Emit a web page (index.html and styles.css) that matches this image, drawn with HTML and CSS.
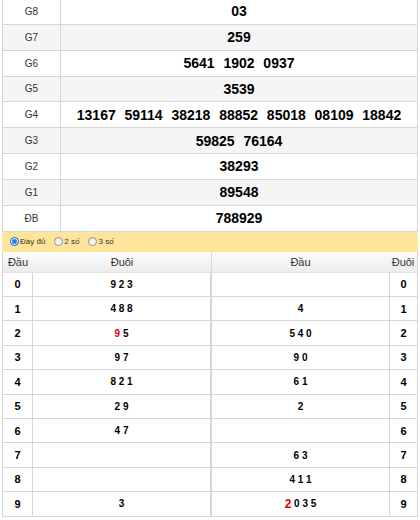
FILE: index.html
```html
<!DOCTYPE html>
<html>
<head>
<meta charset="utf-8">
<link rel="stylesheet" href="styles.css">
</head>
<body>
<div class="wrap">
  <div class="kq">
    <div class="row"><div class="lbl">G8</div><div class="val">03</div></div>
    <div class="row"><div class="lbl">G7</div><div class="val">259</div></div>
    <div class="row"><div class="lbl">G6</div><div class="val">5641  1902  0937</div></div>
    <div class="row"><div class="lbl">G5</div><div class="val">3539</div></div>
    <div class="row"><div class="lbl">G4</div><div class="val">13167  59114  38218  88852  85018  08109  18842</div></div>
    <div class="row"><div class="lbl">G3</div><div class="val">59825  76164</div></div>
    <div class="row"><div class="lbl">G2</div><div class="val">38293</div></div>
    <div class="row"><div class="lbl">G1</div><div class="val">89548</div></div>
    <div class="row"><div class="lbl">ĐB</div><div class="val">788929</div></div>
  </div>
  <div class="opts">
    <span class="opt"><span class="radio on"></span>Đầy đủ</span>
    <span class="opt"><span class="radio"></span>2 số</span>
    <span class="opt"><span class="radio"></span>3 số</span>
  </div>
  <div class="loto">
    <div class="lt lt-left">
      <div class="lh">Đầu</div><div class="lh">Đuôi</div>
      <div class="hd">0</div><div class="tl">9 2 3</div>
      <div class="hd">1</div><div class="tl">4 8 8</div>
      <div class="hd">2</div><div class="tl"><span class="red">9</span> 5</div>
      <div class="hd">3</div><div class="tl">9 7</div>
      <div class="hd">4</div><div class="tl">8 2 1</div>
      <div class="hd">5</div><div class="tl">2 9</div>
      <div class="hd">6</div><div class="tl">4 7</div>
      <div class="hd">7</div><div class="tl"></div>
      <div class="hd">8</div><div class="tl"></div>
      <div class="hd">9</div><div class="tl">3</div>
    </div>
    <div class="lt lt-right">
      <div class="lh">Đầu</div><div class="lh">Đuôi</div>
      <div class="tl"></div><div class="hd">0</div>
      <div class="tl">4</div><div class="hd">1</div>
      <div class="tl">5 4 0</div><div class="hd">2</div>
      <div class="tl">9 0</div><div class="hd">3</div>
      <div class="tl">6 1</div><div class="hd">4</div>
      <div class="tl">2</div><div class="hd">5</div>
      <div class="tl"></div><div class="hd">6</div>
      <div class="tl">6 3</div><div class="hd">7</div>
      <div class="tl">4 1 1</div><div class="hd">8</div>
      <div class="tl"><span class="red big">2</span> 0 3 5</div><div class="hd">9</div>
    </div>
  </div>
</div>
</body>
</html>
```

FILE: styles.css
```css
html, body {
  margin: 0;
  padding: 0;
  background: #fff;
}
body {
  font-family: "Liberation Sans", Arial, sans-serif;
  color: #000;
}
.wrap {
  margin-left: 2px;
  width: 416px;
}
.kq {
  margin-top: -1px;
  border-left: 1px solid #d6d6d6;
  border-right: 1px solid #d6d6d6;
}
.row {
  display: grid;
  grid-template-columns: 58px 1fr;
  height: 25.85px;
  box-sizing: border-box;
  border-bottom: 1px solid #d6d6d6;
  background: #fff;
}
.row:nth-child(even) {
  background: #f5f5f5;
}
.lbl {
  display: flex;
  align-items: center;
  justify-content: center;
  font-size: 10px;
  color: #333;
  border-right: 1px solid #d6d6d6;
}
.val {
  display: flex;
  align-items: center;
  justify-content: center;
  font-size: 14px;
  font-weight: bold;
  white-space: pre;
  word-spacing: 0.5px;
}
.opts {
  height: 20px;
  background: #ffe599;
  display: flex;
  align-items: center;
  padding-left: 8px;
  gap: 9px;
}
.opt {
  display: flex;
  align-items: center;
  gap: 1px;
  font-size: 8px;
  color: #333;
}
.radio {
  width: 7px;
  height: 7px;
  border: 1px solid #8f8f8f;
  border-radius: 50%;
  background: linear-gradient(#e8e8e8, #fff);
}
.radio.on {
  border-color: #2672dc;
  background: #2b7de9;
  box-shadow: inset 0 0 0 1px #fff;
}
.loto {
  display: flex;
}
.lt {
  display: grid;
  grid-auto-rows: 24.4px;
  grid-template-rows: 21px;
}
.lt-left {
  width: 209px;
  box-sizing: border-box;
  border-left: 1px solid #d6d6d6;
  grid-template-columns: 30px 178px;
}
.lt-right {
  width: 207px;
  box-sizing: border-box;
  border-left: 1px solid #d6d6d6;
  border-right: 1px solid #d6d6d6;
  grid-template-columns: 177px 28px;
}
.lh {
  display: flex;
  align-items: center;
  justify-content: center;
  font-size: 11px;
  color: #333;
  background: linear-gradient(#fcfcfc, #ececec);
  border-bottom: 1px solid #e2e2e2;
  box-sizing: border-box;
}
.hd, .tl {
  display: flex;
  align-items: center;
  justify-content: center;
  font-weight: bold;
  border-bottom: 1px solid #d6d6d6;
  box-sizing: border-box;
  white-space: pre;
}
.hd {
  font-size: 11px;
}
.tl {
  font-size: 10px;
}
.lt-left .hd {
  border-right: 1px solid #d6d6d6;
}
.lt-left .tl {
  border-right: 1px solid #d6d6d6;
}
.lt-right .hd {
  border-left: 1px solid #d6d6d6;
}
.red {
  color: #e00000;
}
.big {
  font-size: 12px;
}
```
